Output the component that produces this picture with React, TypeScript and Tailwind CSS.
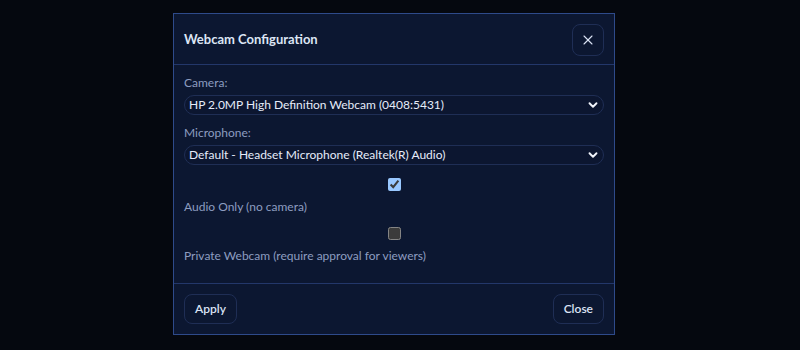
import React from 'react'
import { X, ChevronDown } from 'lucide-react'

const Field = ({ label, value }: { label: string; value: string }) => (
  <div className="mb-2.5">
    <label className="block leading-4 text-xs text-[#8d9dc0] mb-1">{label}</label>
    <div className="relative">
      <select
        defaultValue={value}
        className="block w-full h-5 appearance-none rounded-full border border-[#1f2e55] bg-[#0c1630] pl-1 pr-6 text-xs leading-[18px] text-[#e6ecfa] outline-none"
      >
        <option>{value}</option>
      </select>
      <ChevronDown
        size={14}
        strokeWidth={3.2}
        className="pointer-events-none absolute right-[4px] top-[3px] text-[#f1f4fb]"
      />
    </div>
  </div>
)

const Check = ({ label, checked }: { label: string; checked: boolean }) => (
  <div className="pt-[3px] mb-2">
    <input type="checkbox" defaultChecked={checked} className="block mx-auto w-[13px] h-[13px] [color-scheme:dark]" />
    <label className="block mt-[7px] leading-[18px] text-xs text-[#8d9dc0]">{label}</label>
  </div>
)

export default function App() {
  return (
    <div className="min-h-[350px] bg-[#05080f] pl-[173px] pt-[13px] font-['Lato',sans-serif]">
      <div className="w-[442px] border border-[#2e4a8a] bg-[#0c1731]">
        <div className="flex items-center justify-between border-b border-[#23376a] px-2.5 pt-2.5 pb-2">
          <h2 className="text-[13px] font-bold text-[#dde5f5]">Webcam Configuration</h2>
          <button className="flex h-8 w-8 items-center justify-center rounded-lg border border-[#1f2e55] text-[#dbe3f5]">
            <X size={16} strokeWidth={1.6} />
          </button>
        </div>

        <div className="p-2.5">
          <Field label="Camera:" value="HP 2.0MP High Definition Webcam (0408:5431)" />
          <Field label="Microphone:" value="Default - Headset Microphone (Realtek(R) Audio)" />
          <Check label="Audio Only (no camera)" checked />
          <Check label="Private Webcam (require approval for viewers)" checked={false} />
        </div>

        <div className="flex items-center justify-between border-t border-[#23376a] p-2.5">
          <button className="h-[30px] rounded-lg border border-[#1f2e55] px-[10px] text-xs font-semibold text-[#dbe3f5]">Apply</button>
          <button className="h-[30px] rounded-lg border border-[#1f2e55] px-[10px] text-xs font-semibold text-[#dbe3f5]">Close</button>
        </div>
      </div>
    </div>
  )
}
